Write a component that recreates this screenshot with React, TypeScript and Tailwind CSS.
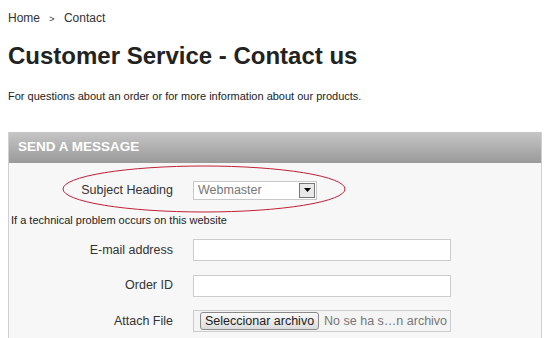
import React from 'react';

const Field: React.FC<{ label: string; className?: string; children: React.ReactNode }> = ({ label, className, children }) => (
    <div className={`flex items-center ${className ?? 'h-[36px]'}`}>
        <label className="w-[164px] text-right text-[12.5px] text-[#333]">{label}</label>
        <div className="ml-[20px]">{children}</div>
    </div>
);

const App: React.FC = () => {
    return (
        <div className="w-[554px] h-[338px] overflow-hidden bg-white text-[#222] font-['Liberation_Sans',Arial,sans-serif]">
            <div className="px-2 pt-[10px]">
                {/* Breadcrumb */}
                <div className="text-[12px] text-[#333] leading-4">
                    Home <span className="text-[9px] mx-[6px]">&gt;</span> Contact
                </div>

                <h1 className="mt-[15px] text-[24px] font-bold leading-7 text-[#222]">Customer Service - Contact us</h1>

                <p className="mt-[18px] text-[11px] leading-4 text-[#222]">
                    For questions about an order or for more information about our products.
                </p>

                {/* Panel */}
                <div className="mt-[28px] w-[534px] border-x border-[#d0d0d0] bg-[#f7f7f7]">
                    <div className="h-[31px] bg-gradient-to-b from-[#c6c6c6] to-[#9a9a9a] px-[9px] flex items-center">
                        <span className="text-white font-bold text-[13.5px] uppercase">Send a message</span>
                    </div>

                    <div className="relative pt-[9px]">
                        <svg className="absolute left-[52px] top-[1px]" width="286" height="50" viewBox="0 0 286 50">
                            <ellipse cx="143" cy="25" rx="141" ry="23" fill="none" stroke="#c0203a" strokeWidth="1" />
                        </svg>
                        <div className="flex items-center h-[36px]">
                            <label className="w-[164px] text-right text-[12.5px] text-[#333]">Subject Heading</label>
                            <div className="ml-[20px] flex items-center w-[124px] h-[19px] border border-[#c8c8c8] bg-white">
                                <span className="flex-1 pl-[4px] text-[12.5px] text-[#777] leading-4">Webmaster</span>
                                <span className="w-[16px] h-[15px] mr-[1px] border border-[#777] bg-[#e8e8e8] flex items-center justify-center">
                                    <svg width="7" height="4" viewBox="0 0 7 4"><path d="M0 0h7L3.5 4z" fill="#000" /></svg>
                                </span>
                            </div>
                        </div>
                        <div className="pl-[2px] text-[11px] leading-4 text-[#222] mt-[4px]">If a technical problem occurs on this website</div>

                        <div className="mt-[4px]">
                            <Field label="E-mail address">
                                <input type="text" className="block w-[258px] h-[22px] border border-[#ccc] bg-white outline-none" />
                            </Field>
                            <Field label="Order ID" className="h-[35px]">
                                <input type="text" className="block w-[258px] h-[22px] border border-[#ccc] bg-white outline-none" />
                            </Field>
                            <Field label="Attach File">
                                <div className="w-[258px] h-[22px] border border-[#ccc] bg-[#f4f4f4] flex items-center pl-[6px]">
                                    <span className="h-[18px] px-[4px] border border-[#8a8a8a] rounded-[3px] bg-gradient-to-b from-[#fafafa] to-[#dcdcdc] text-[12.5px] leading-4 text-[#222]">
                                        Seleccionar archivo
                                    </span>
                                    <span className="ml-[5px] text-[12.5px] text-[#777]">No se ha s…n archivo</span>
                                </div>
                            </Field>
                        </div>
                    </div>
                </div>
            </div>
        </div>
    );
};

export default App;
